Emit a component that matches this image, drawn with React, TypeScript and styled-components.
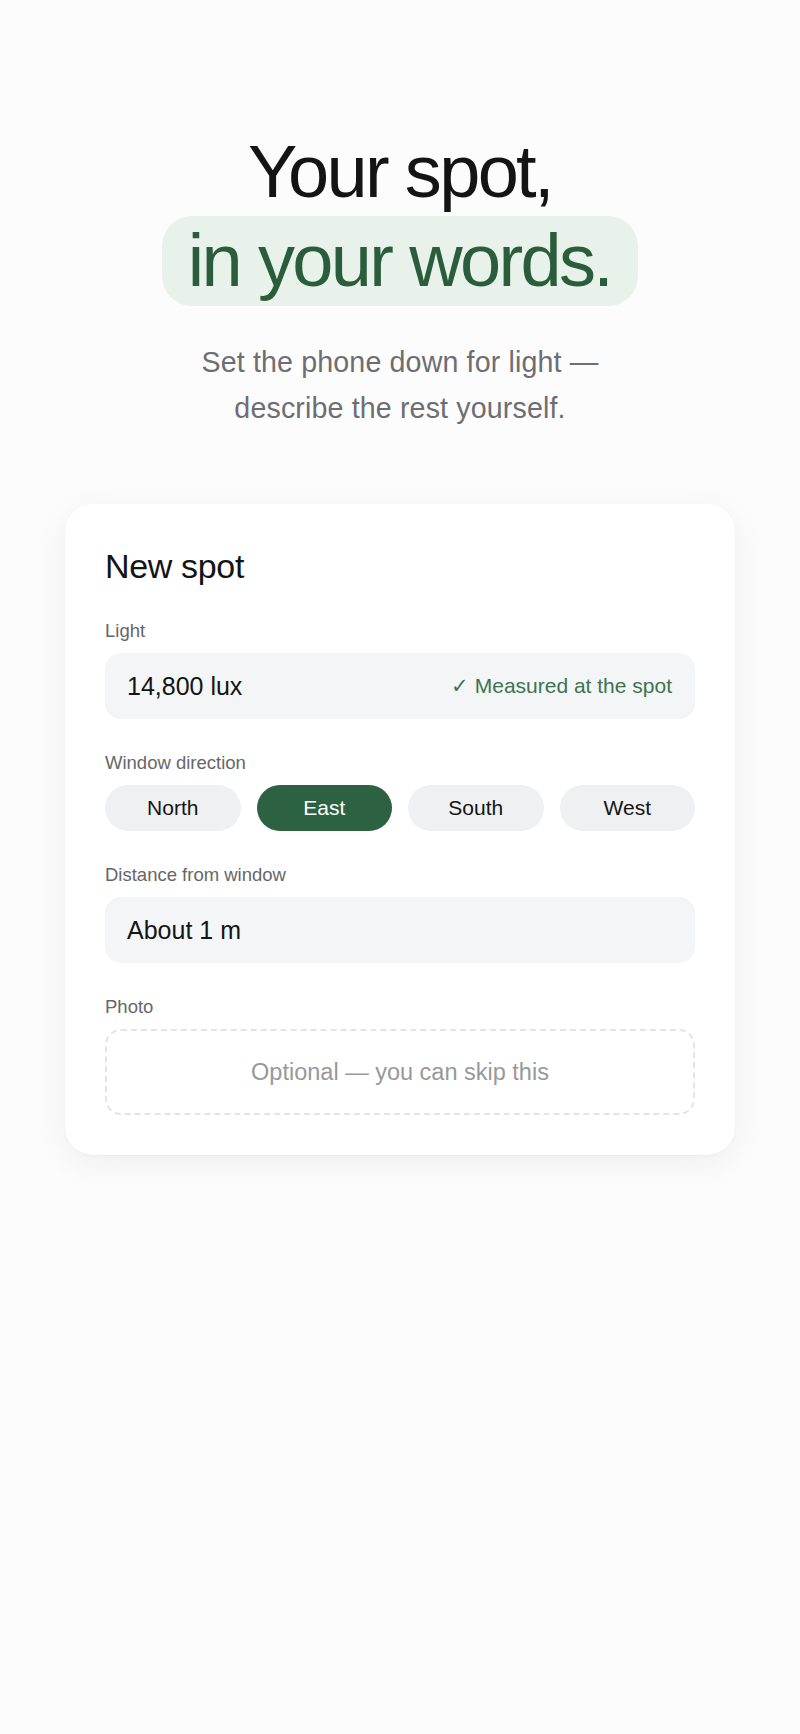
import React, { useState } from 'react';
import styled, { createGlobalStyle } from 'styled-components';

const GlobalStyle = createGlobalStyle`
  body {
    margin: 0;
    background: #fcfcfc;
    font-family: 'Liberation Sans', Arial, sans-serif;
    -webkit-font-smoothing: antialiased;
  }
`;

const directions = ['North', 'East', 'South', 'West'];

const App = () => {
  const [direction, setDirection] = useState('East');

  return (
    <Page>
      <GlobalStyle />
      <Hero>
        <Title>
          Your spot,
          <br />
          <Highlight>in your words.</Highlight>
        </Title>
        <Subtitle>
          Set the phone down for light —
          <br />
          describe the rest yourself.
        </Subtitle>
      </Hero>

      <Card>
        <CardTitle>New spot</CardTitle>

        {/* 조도 */}
        <Field>
          <Label>Light</Label>
          <ValueBox>
            <span>14,800 lux</span>
            <Measured>✓ Measured at the spot</Measured>
          </ValueBox>
        </Field>

        {/* 창 방향 */}
        <Field>
          <Label>Window direction</Label>
          <Segments>
            {directions.map((d) => (
              <Segment
                key={d}
                $active={direction === d}
                onClick={() => setDirection(d)}
              >
                {d}
              </Segment>
            ))}
          </Segments>
        </Field>

        <Field>
          <Label>Distance from window</Label>
          <ValueBox>
            <span>About 1 m</span>
          </ValueBox>
        </Field>

        <Field>
          <Label>Photo</Label>
          <PhotoDrop>Optional — you can skip this</PhotoDrop>
        </Field>
      </Card>
    </Page>
  );
};

export default App;

const Page = styled.div`
  min-height: 1734px;
  display: flex;
  flex-direction: column;
  align-items: center;
  padding-top: 128px;
  box-sizing: border-box;
`;

const Hero = styled.div`
  text-align: center;
`;

const Title = styled.h1`
  margin: 0;
  font-size: 74px;
  line-height: 88px;
  font-weight: 400;
  letter-spacing: -0.036em;
  color: #141414;
`;

//초록 배경 강조
const Highlight = styled.span`
  display: inline-block;
  padding: 1px 27px 1px 26px;
  border-radius: 30px;
  background: #e9f1eb;
  color: #2a5d3c;
`;

const Subtitle = styled.p`
  margin: 33px 0 0;
  font-size: 28.6px;
  line-height: 46px;
  color: #6e6e72;
  letter-spacing: 0.005em;
`;

const Card = styled.div`
  margin-top: 73px;
  width: 670px;
  box-sizing: border-box;
  padding: 42px 40px 40px;
  background: #ffffff;
  border-radius: 28px;
  box-shadow: 0 8px 36px rgba(0, 0, 0, 0.06), 0 1px 3px rgba(0, 0, 0, 0.03);
`;

const CardTitle = styled.h2`
  margin: 0;
  font-size: 34px;
  line-height: 41px;
  font-weight: 400;
  letter-spacing: -0.01em;
  color: #141414;
`;

const Field = styled.div`
  margin-top: 33px;
`;

const Label = styled.div`
  font-size: 18.5px;
  line-height: 22px;
  color: #666668;
  margin-bottom: 11px;
`;

const ValueBox = styled.div`
  height: 66px;
  border-radius: 16px;
  background: #f3f5f6;
  padding: 0 23px 0 22px;
  display: flex;
  align-items: center;
  justify-content: space-between;
  font-size: 25px;
  color: #141414;
`;

const Measured = styled.span`
  font-size: 21px;
  color: #3e7350;
`;

const Segments = styled.div`
  display: grid;
  grid-template-columns: repeat(4, 1fr);
  gap: 16px;
`;

const Segment = styled.button<{ $active: boolean }>`
  height: 46px;
  border: none;
  border-radius: 23px;
  font-family: inherit;
  font-size: 21px;
  cursor: pointer;
  background: ${(p) => (p.$active ? '#2c6141' : '#eff0f2')};
  color: ${(p) => (p.$active ? '#ffffff' : '#141414')};
`;

const PhotoDrop = styled.div`
  height: 86px;
  box-sizing: border-box;
  border: 2px dashed #e3e4e6;
  border-radius: 16px;
  display: flex;
  align-items: center;
  justify-content: center;
  font-size: 23.5px;
  color: #98989c;
`;
